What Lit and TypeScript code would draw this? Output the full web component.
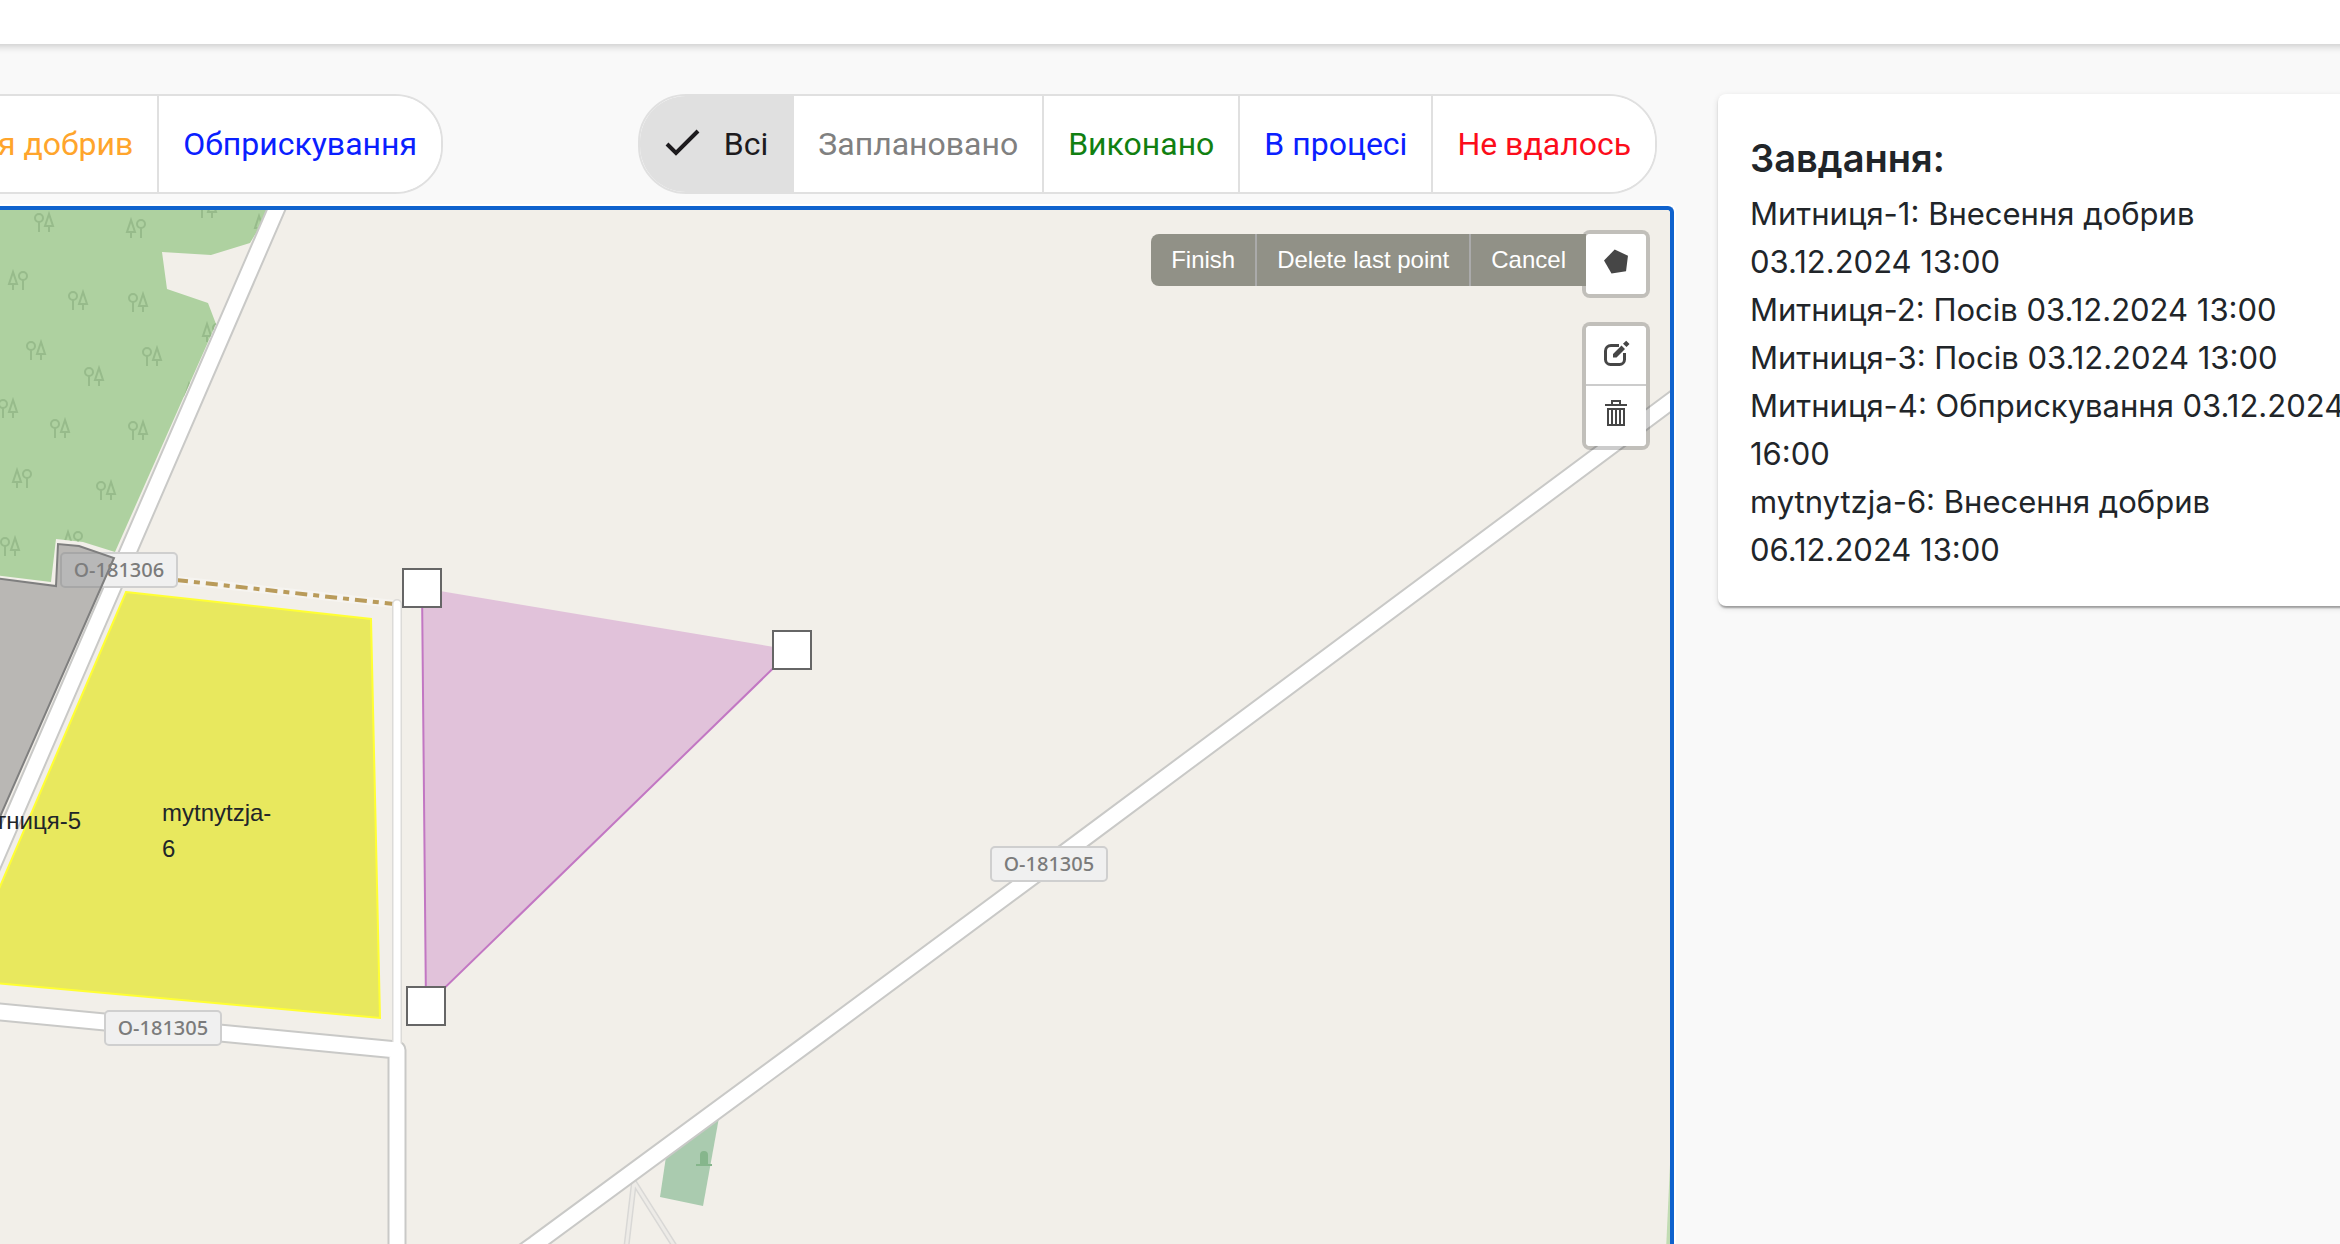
import { LitElement, html, svg, css } from "lit";
import { customElement, state } from "lit/decorators.js";

interface FilterOption {
  label: string;
  tone: string;
}

const OPERATIONS: FilterOption[] = [
  { label: "Внесення добрив", tone: "orange" },
  { label: "Обприскування", tone: "blue" },
];

const STATUSES: FilterOption[] = [
  { label: "Всі", tone: "dark" },
  { label: "Заплановано", tone: "grey" },
  { label: "Виконано", tone: "green" },
  { label: "В процесі", tone: "blue" },
  { label: "Не вдалось", tone: "red" },
];

const TASKS = [
  "Митниця-1: Внесення добрив 03.12.2024 13:00",
  "Митниця-2: Посів 03.12.2024 13:00",
  "Митниця-3: Посів 03.12.2024 13:00",
  "Митниця-4: Обприскування 03.12.2024 16:00",
  "mytnytzja-6: Внесення добрив 06.12.2024 13:00",
];

/* Centre of each pair of trees; the flag is true when the conifer is on the left. */
const TREES: [number, number, boolean][] = [
  [44, 222, false], [136, 228, true], [207, 208, false], [264, 224, true],
  [18, 280, true], [78, 300, false], [138, 302, false], [36, 350, false],
  [152, 356, false], [94, 376, false], [212, 332, true], [194, 392, true],
  [8, 408, false], [60, 428, false], [138, 430, false], [22, 478, true],
  [106, 490, false], [10, 546, false], [73, 540, true],
];

@customElement("field-map")
export class FieldMap extends LitElement {
  static styles = css`
    :host {
      display: block;
      position: relative;
      box-sizing: border-box;
      overflow: hidden;
      background: #f2efe9;
      border-top: 4px solid #0f62cd;
      border-right: 4px solid #0f62cd;
      border-top-right-radius: 6px;
      box-shadow: 0 0 0 2px #fff;
      font-family: "Liberation Sans", Arial, sans-serif;
    }
    .canvas {
      display: block;
      width: 100%;
      height: 100%;
    }
    .casing { fill: none; stroke: #c9c9c7; stroke-width: 19; stroke-linejoin: round; }
    .road { fill: none; stroke: #fff; stroke-width: 15; stroke-linejoin: round; }
    .lane-casing { fill: none; stroke: #dcdbd8; stroke-width: 10; stroke-linecap: round; }
    .lane { fill: none; stroke: #fff; stroke-width: 7; stroke-linecap: round; }
    .path-casing { fill: none; stroke: #d9d8d6; stroke-width: 6; }
    .path { fill: none; stroke: #edebe7; stroke-width: 3; }
    .track-halo { fill: none; stroke: #f6f4f0; stroke-width: 8; }
    .track { fill: none; stroke: #b99b5a; stroke-width: 4; stroke-dasharray: 12 6 6 6; }
    .tree { fill: none; stroke: #97bb8b; stroke-width: 2; }
    .plate { fill: #f0f0f0; stroke: #cfcfcf; stroke-width: 2; }
    .plate-text { font: 500 20px "Noto Sans", sans-serif; fill: #7b7b7b; text-anchor: middle; }
    .name { font: 24px "Liberation Sans", Arial, sans-serif; fill: #212529; }
    .name-end { text-anchor: end; }
    .handle { fill: #fff; stroke: #666; stroke-width: 2; }
    .tools {
      position: absolute;
      top: 20px;
      right: 20px;
      display: flex;
      flex-direction: column;
      align-items: flex-end;
      gap: 24px;
    }
    .draw { display: flex; align-items: flex-start; }
    .bar {
      border: 4px solid rgba(0, 0, 0, 0.2);
      border-radius: 8px;
      background-clip: padding-box;
      background-color: #fff;
      overflow: hidden;
    }
    .tool {
      display: flex;
      align-items: flex-start;
      box-sizing: border-box;
      width: 60px;
      height: 60px;
      padding: 0;
      border: 0;
      background: #fff;
      cursor: pointer;
    }
    .tool:not(:last-child) { border-bottom: 2px solid #ccc; }
    .tool svg { display: block; width: 60px; height: 58px; }
    .actions {
      display: flex;
      list-style: none;
      margin: 4px -4px 0 0;
      padding: 0;
      position: relative;
    }
    .action {
      display: block;
      height: 52px;
      box-sizing: border-box;
      padding: 0 20px;
      border: 0;
      border-left: 2px solid #aaa;
      background: #919187;
      color: #fff;
      font: 24px/52px "Liberation Sans", Arial, sans-serif;
      cursor: pointer;
    }
    li:first-child .action { border-left: 0; border-radius: 8px 0 0 8px; }
  `;

  private tree([x, y, coniferLeft]: [number, number, boolean]) {
    const round = coniferLeft ? x + 5 : x - 5;
    const conifer = coniferLeft ? x - 5 : x + 5;
    return svg`
      <circle class="tree" cx=${round} cy=${y - 4} r="4"></circle>
      <path class="tree" d="M${round} ${y}V${y + 10}M${conifer} ${y - 8}l-4 12h8zM${conifer} ${y + 4}v6"></path>`;
  }

  private plate(x: number, y: number, label: string) {
    return svg`
      <rect class="plate" x=${x - 58} y=${y - 17} width="116" height="34" rx="4"></rect>
      <text class="plate-text" x=${x} y=${y + 7}>${label}</text>`;
  }

  private handle(x: number, y: number) {
    return svg`<rect class="handle" x=${x - 19} y=${y - 19} width="38" height="38"></rect>`;
  }

  render() {
    const roads = [
      "M276 210L286 187M276 210L-20 894",
      "M-10 1011L397 1050V1250",
      "M535 1244L812 1040L1075 845L1670 402L1690 387M535 1244L521 1254",
    ];
    return html`
      <svg class="canvas" viewBox="0 210 1670 1034" preserveAspectRatio="xMinYMin slice" role="img" aria-label="Карта полів">
        <defs>
          <clipPath id="forest">
            <path d="M-5 200H270L250 243L211 255L162 252L167 289L208 303L216 324L115 552L83 542L56 539L51 582L-5 575z"></path>
          </clipPath>
        </defs>
        <path fill="#aed1a0" d="M-5 200H276L250 243L211 255L162 252L167 289L208 303L216 324L115 552L83 542L56 539L51 582L-5 575z"></path>
        <g clip-path="url(#forest)">${TREES.map((t) => this.tree(t))}</g>
        <path fill="#c1dcb3" d="M1670 1165L1666 1250H1670z"></path>
        <path fill="#aacbaf" d="M720 1112L703 1206L660 1197L667 1150z"></path>
        <path fill="#86b68c" d="M700 1164V1155a4 4 0 0 1 8 0V1164h4v2h-16v-2z"></path>
        <path class="path-casing" d="M634 1182L626 1250M634 1182L677 1250"></path>
        <path class="path" d="M634 1182L626 1250M634 1182L677 1250"></path>
        <path class="track-halo" d="M176 580L394 604"></path>
        <path class="track" d="M176 580L394 604"></path>
        ${roads.map((d) => svg`<path class="casing" d=${d}></path>`)}
        <path class="lane-casing" d="M397 604V1045"></path>
        ${roads.map((d) => svg`<path class="road" d=${d}></path>`)}
        <path class="lane" d="M397 604V1048"></path>
        ${this.plate(119, 570, "О-181306")}
        ${this.plate(163, 1028, "О-181305")}
        ${this.plate(1049, 864, "О-181305")}
        <path fill="#808080" fill-opacity="0.5" stroke="#7f7f7f" stroke-width="2" d="M-5 578L56 586L58 544L79 546L114 558L-5 828z"></path>
        <path fill="#e8e85e" stroke="#ffff33" stroke-width="2" d="M126 592L371 619L380 1018L-40 980z"></path>
        <text class="name name-end" x="81" y="829">Митниця-5</text>
        <text class="name" x="162" y="821">mytnytzja-</text>
        <text class="name" x="162" y="857">6</text>
        <path fill="#e1c2da" d="M422 588L792 650L426 1006z"></path>
        <path fill="none" stroke="#c277c3" stroke-width="2" d="M422 588L426 1006L792 650"></path>
        ${this.handle(422, 588)}${this.handle(792, 650)}${this.handle(426, 1006)}
      </svg>
      <div class="tools">
        <div class="draw">
          <ul class="actions">
            <li><button class="action" type="button">Finish</button></li>
            <li><button class="action" type="button">Delete last point</button></li>
            <li><button class="action" type="button">Cancel</button></li>
          </ul>
          <div class="bar">
            <button class="tool" type="button" aria-label="Draw a polygon">
              <svg viewBox="0 0 60 58"><path fill="#464646" d="M18 26.5L28.7 15.5L42 21.8L40 37.2L25.5 39.5z"></path></svg>
            </button>
          </div>
        </div>
        <div class="bar">
          <button class="tool" type="button" aria-label="Edit layers">
            <svg viewBox="0 0 60 58">
              <path fill="none" stroke="#464646" stroke-width="3" d="M33 19.5H25a5.500 5.500 0 0 0-5.500 5.500V33.500a5 5 0 0 0 5 5H33.500a5 5 0 0 0 5-5V27"></path>
              <path fill="#464646" d="M27 31.500V28L35.500 19.500L39 23L30.500 31.500zM37 17.800L40.200 14.800L43.500 18L40.500 21z"></path>
            </svg>
          </button>
          <button class="tool" type="button" aria-label="Delete layers">
            <svg viewBox="0 0 60 58">
              <path fill="#464646" fill-rule="evenodd" d="M19 18H25V14H35V18H41V20H19zM27 18H33V16H27zM21 22H39V40H21zM23 24V38H25V24zM27 24V38H29V24zM31 24V38H33V24zM35 24V38H37V24z"></path>
            </svg>
          </button>
        </div>
      </div>
    `;
  }
}

@customElement("app-root")
export class AppRoot extends LitElement {
  @state() private status = "Всі";

  static styles = css`
    :host {
      display: flex;
      flex-direction: column;
      height: 100vh;
      overflow: hidden;
      background: #f9f9f9;
      color: #212529;
      font-family: Roboto, sans-serif;
    }
    .header {
      flex: none;
      height: 44px;
      margin: 0 -12px;
      background: #fff;
      box-shadow: 0 2px 8px rgba(0, 0, 0, 0.2);
    }
    .content { flex: 1; min-height: 0; display: flex; padding-top: 50px; }
    .main { flex: 1; min-width: 0; display: flex; flex-direction: column; gap: 12px; }
    .filters { display: flex; justify-content: space-between; padding-right: 17px; }
    .filter-window { width: 443px; display: flex; justify-content: flex-end; overflow: hidden; }
    .group {
      flex: none;
      display: flex;
      border: 2px solid #e0e0e0;
      border-radius: 48px;
      overflow: hidden;
      background: #fff;
    }
    .option {
      display: flex;
      align-items: center;
      gap: 24px;
      height: 96px;
      padding: 0 24px;
      border: 0;
      background: #fff;
      font: 32px/48px Roboto, sans-serif;
      white-space: nowrap;
      cursor: pointer;
    }
    .option + .option { border-left: 2px solid #e0e0e0; }
    .option[aria-pressed="true"] { background: #e0e0e0; }
    .check { width: 36px; height: 36px; }
    .dark { color: #1d1b1e; }
    .grey { color: #808080; }
    .green { color: #118011; }
    .blue { color: #0a20ff; }
    .red { color: #fc0d1b; }
    .orange { color: #ffa52c; }
    .map { flex: 1; min-height: 0; }
    .aside { flex: 0 0 622px; min-width: 0; padding-left: 44px; }
    .card {
      box-sizing: border-box;
      width: 672px;
      padding: 32px;
      border-radius: 8px;
      background: #fff;
      box-shadow: 0 4px 2px -2px rgba(0, 0, 0, 0.2), 0 2px 2px rgba(0, 0, 0, 0.14), 0 2px 6px rgba(0, 0, 0, 0.12);
    }
    .title { margin: 0; font: 600 38px/64px Inter, sans-serif; }
    .tasks { list-style: none; margin: 0; padding: 0; font: 31px/48px Inter, sans-serif; }
  `;

  private option(o: FilterOption, pressed: boolean, pick?: () => void) {
    return html`
      <button class="option ${o.tone}" type="button" aria-pressed=${pressed ? "true" : "false"} @click=${pick}>
        ${pressed
          ? html`<svg class="check" viewBox="0 0 36 36" aria-hidden="true">
              <path fill="none" stroke="currentColor" stroke-width="4" d="M3 18L12 27L34 5"></path>
            </svg>`
          : ""}
        ${o.label}
      </button>
    `;
  }

  render() {
    return html`
      <header class="header"></header>
      <div class="content">
        <main class="main">
          <div class="filters">
            <div class="filter-window">
              <div class="group" role="group">${OPERATIONS.map((o) => this.option(o, false))}</div>
            </div>
            <div class="group" role="group">
              ${STATUSES.map((o) => this.option(o, this.status === o.label, () => (this.status = o.label)))}
            </div>
          </div>
          <field-map class="map"></field-map>
        </main>
        <aside class="aside">
          <section class="card">
            <h2 class="title">Завдання:</h2>
            <ul class="tasks">
              ${TASKS.map((t) => html`<li>${t}</li>`)}
            </ul>
          </section>
        </aside>
      </div>
    `;
  }
}
